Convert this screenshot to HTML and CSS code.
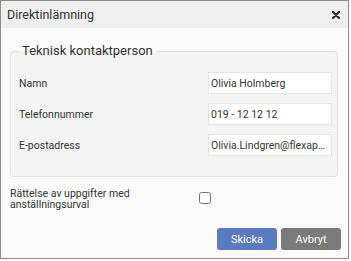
FILE: index.html
```html
<!DOCTYPE html>
<html lang="sv">
  <head>
    <meta charset="UTF-8" />
    <title>Direktinlämning</title>
    <link rel="stylesheet" href="styles.css">
  </head>
  <body>
    <div class="dialog">
      <div class="dialog-header">
        <span class="title">Direktinlämning</span>
        <span class="close">
          <svg width="8" height="8" viewBox="0 0 8 8"><path d="M1 1 L7 7 M7 1 L1 7" stroke="#333" stroke-width="2.4" stroke-linecap="round"/></svg>
        </span>
      </div>
      <div class="dialog-body">
        <fieldset class="group">
          <legend>Teknisk kontaktperson</legend>
          <div class="row">
            <label>Namn</label>
            <input type="text" value="Olivia Holmberg">
          </div>
          <div class="row">
            <label>Telefonnummer</label>
            <input type="text" value="019 - 12 12 12">
          </div>
          <div class="row">
            <label>E-postadress</label>
            <input type="text" value="Olivia.Lindgren@flexapplications.se">
          </div>
        </fieldset>
        <div class="check-row">
          <label>Rättelse av uppgifter med anställningsurval</label>
          <input type="checkbox">
        </div>
        <div class="actions">
          <button class="btn btn-primary">Skicka</button>
          <button class="btn btn-default">Avbryt</button>
        </div>
      </div>
    </div>
  </body>
</html>
```
FILE: styles.css
```css
* {
  margin: 0;
  padding: 0;
  box-sizing: border-box;
}
body {
  background: #fff;
  font-family: Roboto, "Liberation Sans", sans-serif;
  color: #333;
}
.dialog {
  width: 349px;
  height: 259px;
  border: 1px solid #8c8c8c;
  background: #fafafa;
}
.dialog-header {
  height: 27px;
  background: #efefef;
  display: flex;
  align-items: center;
  justify-content: space-between;
  padding: 0 8px 0 6px;
}
.title {
  font-size: 12.5px;
}
.close {
  display: flex;
  margin-top: 1px;
}
.dialog-body {
  padding: 15px 7px 0 9px;
}
.group {
  border: 1px solid #e2e2e2;
  border-radius: 4px;
  background: #f4f4f4;
  padding: 13px 5px 20px 8px;
  margin-right: 3px;
}
.group legend {
  font-size: 13px;
  line-height: 16px;
  padding: 0 3px;
}
.row {
  display: flex;
  align-items: center;
  justify-content: space-between;
  height: 22px;
  margin-bottom: 9px;
}
.row:last-child {
  margin-bottom: 0;
}
.row label {
  font-size: 10.5px;
}
.row input {
  width: 124px;
  height: 22px;
  border: 1px solid #e4e4e4;
  background: #fff;
  padding: 0 3px 0 2px;
  font-family: Roboto, "Liberation Sans", sans-serif;
  font-size: 10.5px;
  color: #333;
  text-overflow: ellipsis;
  outline: none;
}
.check-row {
  display: flex;
  margin-top: 10px;
}
.check-row label {
  width: 189px;
  font-size: 10.5px;
  line-height: 11px;
  padding-top: 1px;
}
.check-row input {
  width: 12px;
  height: 12px;
  margin: 5px 0 0 0;
}
.actions {
  display: flex;
  justify-content: flex-end;
  gap: 4px;
  margin-top: 18px;
}
.btn {
  width: 60px;
  height: 22px;
  border: none;
  border-radius: 3px;
  color: #fff;
  font-family: Roboto, "Liberation Sans", sans-serif;
  font-size: 11px;
}
.btn-primary {
  background: #5a7bbf;
}
.btn-default {
  background: #7a7a7a;
}
```
